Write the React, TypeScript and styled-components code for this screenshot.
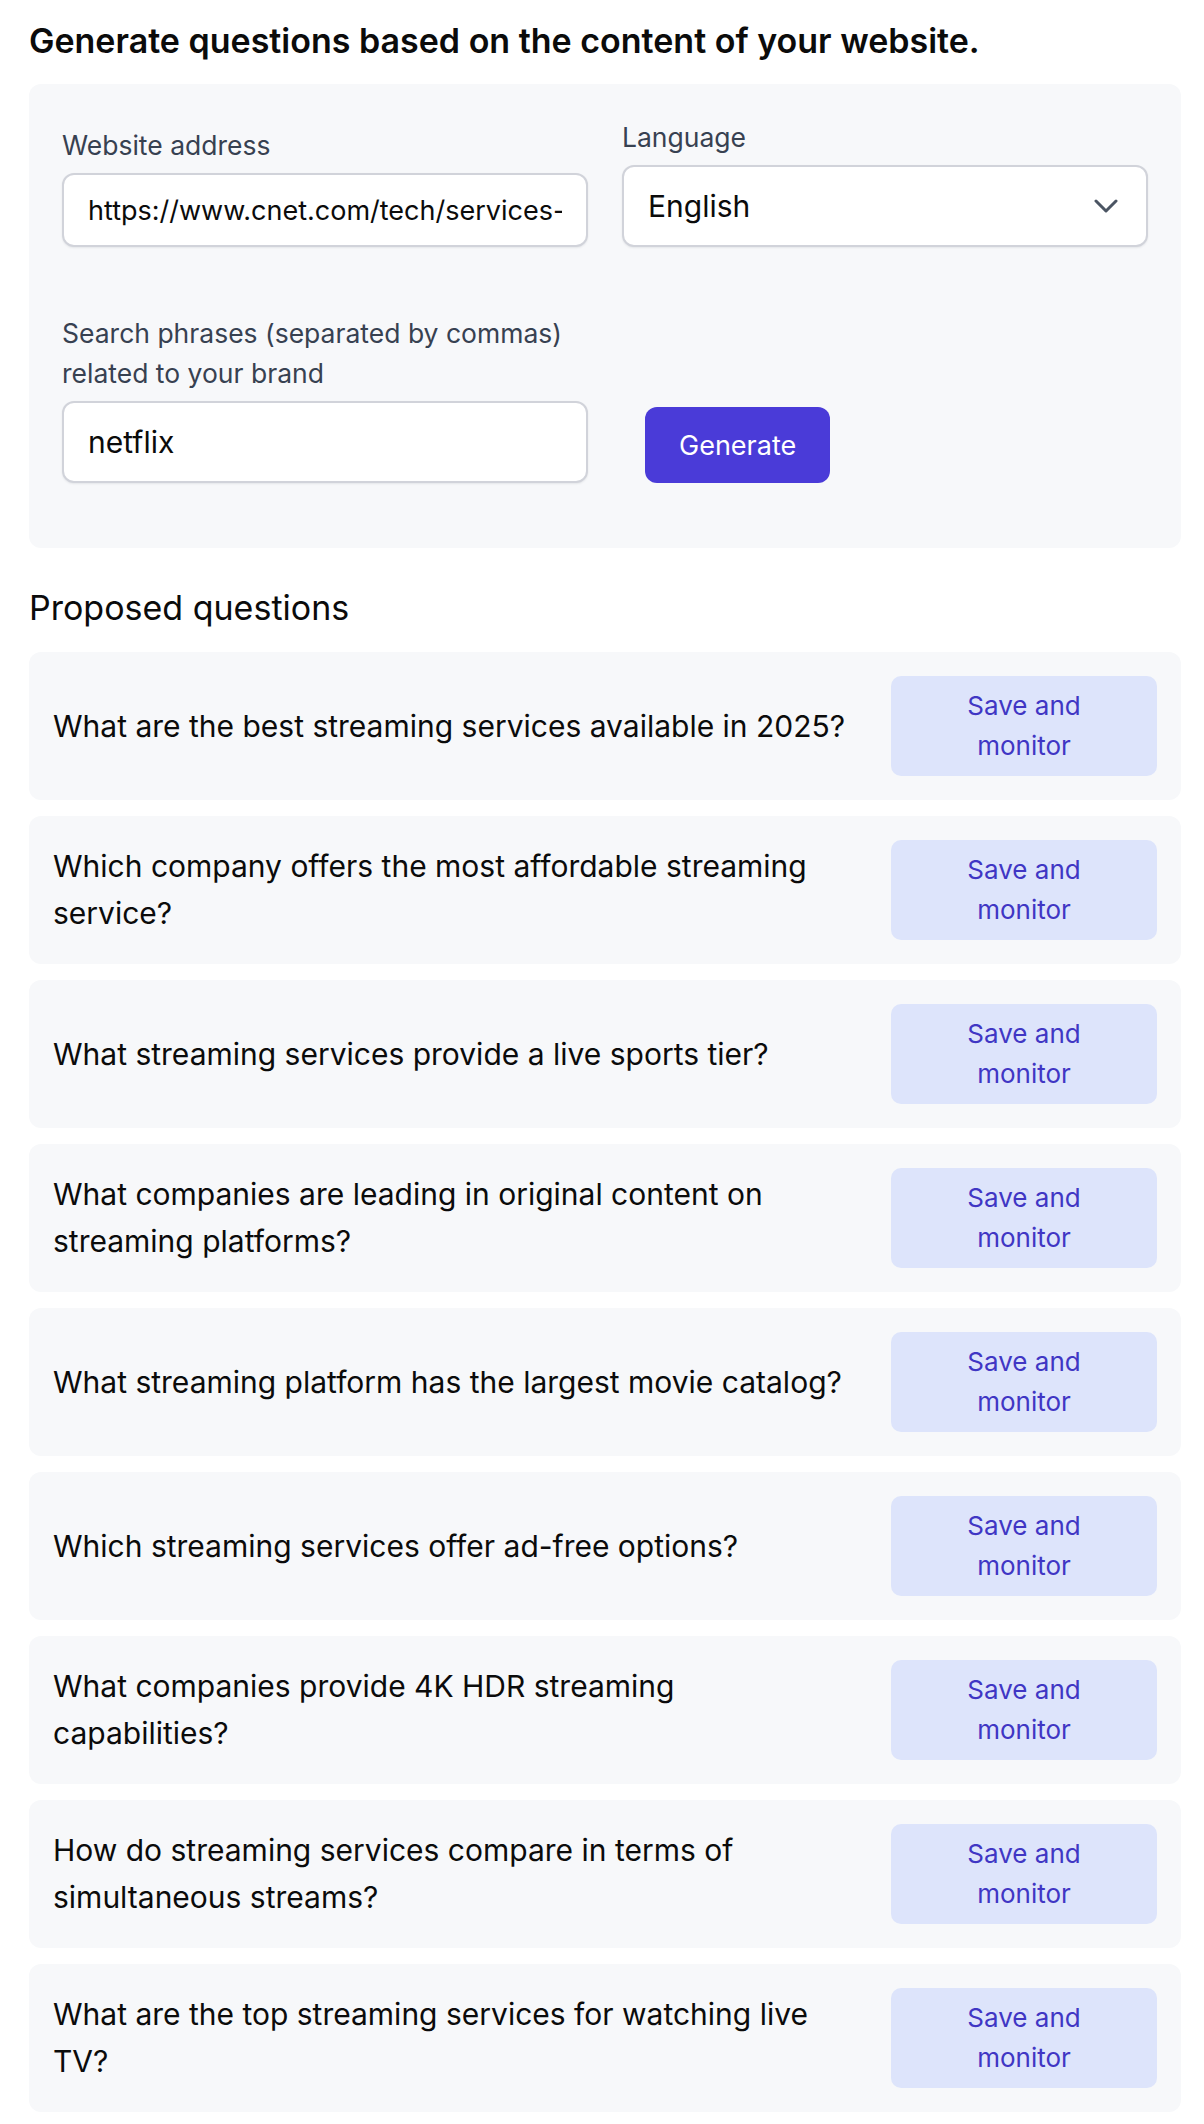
import React from 'react';
import styled, { createGlobalStyle } from 'styled-components';

const GlobalStyle = createGlobalStyle`
  * {
    box-sizing: border-box;
  }
  body {
    margin: 0;
    background: #ffffff;
    font-family: 'Inter', 'Noto Sans', sans-serif;
    color: #111111;
  }
`;

const Page = styled.div`
  width: 1152px;
  margin-left: 29px;
  padding-top: 20px;
`;

const Title = styled.h1`
  margin: 0 0 23px;
  font-size: 34px;
  font-weight: 600;
  line-height: 41px;
  color: #0b0b0b;
`;

const FormPanel = styled.div`
  background: #f7f8fa;
  border-radius: 12px;
  padding: 33px 33px 65px;
  display: grid;
  grid-template-columns: 1fr 1fr;
  column-gap: 34px;
  row-gap: 66px;
  align-items: end;
`;

const Field = styled.div`
  display: flex;
  flex-direction: column;
  gap: 8px;
`;

const Label = styled.label`
  font-size: 26.5px;
  line-height: 40px;
  color: #374151;
`;

const TextInput = styled.input<{ $size: number; $height: number }>`
  width: 100%;
  height: ${(p) => p.$height}px;
  font-family: 'Inter', 'Noto Sans', sans-serif;
  font-size: ${(p) => p.$size}px;
  color: #0b0b0b;
  padding: 0 24px;
  border: 2px solid #d1d3da;
  border-radius: 12px;
  background: #ffffff;
  box-shadow: 0 1px 2px rgba(16, 24, 40, 0.08);
  outline: none;
`;

const SelectBox = styled.div`
  display: flex;
  align-items: center;
  justify-content: space-between;
  height: 82px;
  font-size: 30px;
  color: #0b0b0b;
  padding: 0 28px 0 24px;
  border: 2px solid #d1d3da;
  border-radius: 12px;
  background: #ffffff;
  box-shadow: 0 1px 2px rgba(16, 24, 40, 0.08);
`;

const GenerateButton = styled.button`
  justify-self: start;
  margin-left: 23px;
  height: 76px;
  padding: 0 34px;
  border: none;
  border-radius: 12px;
  background: #4a3bd8;
  color: #ffffff;
  font-family: 'Inter', 'Noto Sans', sans-serif;
  font-size: 27px;
  cursor: pointer;
`;

const SectionTitle = styled.h2`
  margin: 39px 0 24px;
  font-size: 34px;
  font-weight: 400;
  line-height: 41px;
  color: #0b0b0b;
`;

const QuestionList = styled.div`
  display: flex;
  flex-direction: column;
  gap: 16px;
`;

const QuestionCard = styled.div`
  display: flex;
  align-items: center;
  gap: 40px;
  padding: 24px;
  background: #f7f8fa;
  border-radius: 12px;
`;

const QuestionText = styled.p`
  flex: 1;
  margin: 0;
  font-size: 30px;
  line-height: 47px;
  color: #0b0b0b;
`;

const SaveButton = styled.button`
  flex: none;
  width: 266px;
  height: 100px;
  padding: 10px 44px;
  border: none;
  border-radius: 10px;
  background: #dde4fb;
  color: #4036c4;
  font-family: 'Inter', 'Noto Sans', sans-serif;
  font-size: 26px;
  line-height: 40px;
  cursor: pointer;
`;

const Chevron = () => (
  <svg width="24" height="14" viewBox="0 0 24 14" fill="none">
    <polyline
      points="2,2 12,12 22,2"
      stroke="#4b5563"
      strokeWidth="3"
      strokeLinecap="round"
      strokeLinejoin="round"
    />
  </svg>
);

const questions = [
  'What are the best streaming services available in 2025?',
  'Which company offers the most affordable streaming service?',
  'What streaming services provide a live sports tier?',
  'What companies are leading in original content on streaming platforms?',
  'What streaming platform has the largest movie catalog?',
  'Which streaming services offer ad-free options?',
  'What companies provide 4K HDR streaming capabilities?',
  'How do streaming services compare in terms of simultaneous streams?',
  'What are the top streaming services for watching live TV?',
];

const App = (): JSX.Element => {
  return (
    <Page>
      <GlobalStyle />
      <Title>Generate questions based on the content of your website.</Title>
      <FormPanel>
        <Field>
          <Label>Website address</Label>
          <TextInput
            $size={27}
            $height={74}
            defaultValue="https://www.cnet.com/tech/services-and-software/best-streaming-service/"
          />
        </Field>
        <Field>
          <Label>Language</Label>
          <SelectBox>
            <span>English</span>
            <Chevron />
          </SelectBox>
        </Field>
        <Field>
          <Label>
            Search phrases (separated by commas)
            <br />
            related to your brand
          </Label>
          <TextInput $size={30} $height={82} defaultValue="netflix" />
        </Field>
        <GenerateButton>Generate</GenerateButton>
      </FormPanel>

      <SectionTitle>Proposed questions</SectionTitle>
      <QuestionList>
        {questions.map((q) => (
          <QuestionCard key={q}>
            <QuestionText>{q}</QuestionText>
            <SaveButton>Save and monitor</SaveButton>
          </QuestionCard>
        ))}
      </QuestionList>
    </Page>
  );
};

export default App;
